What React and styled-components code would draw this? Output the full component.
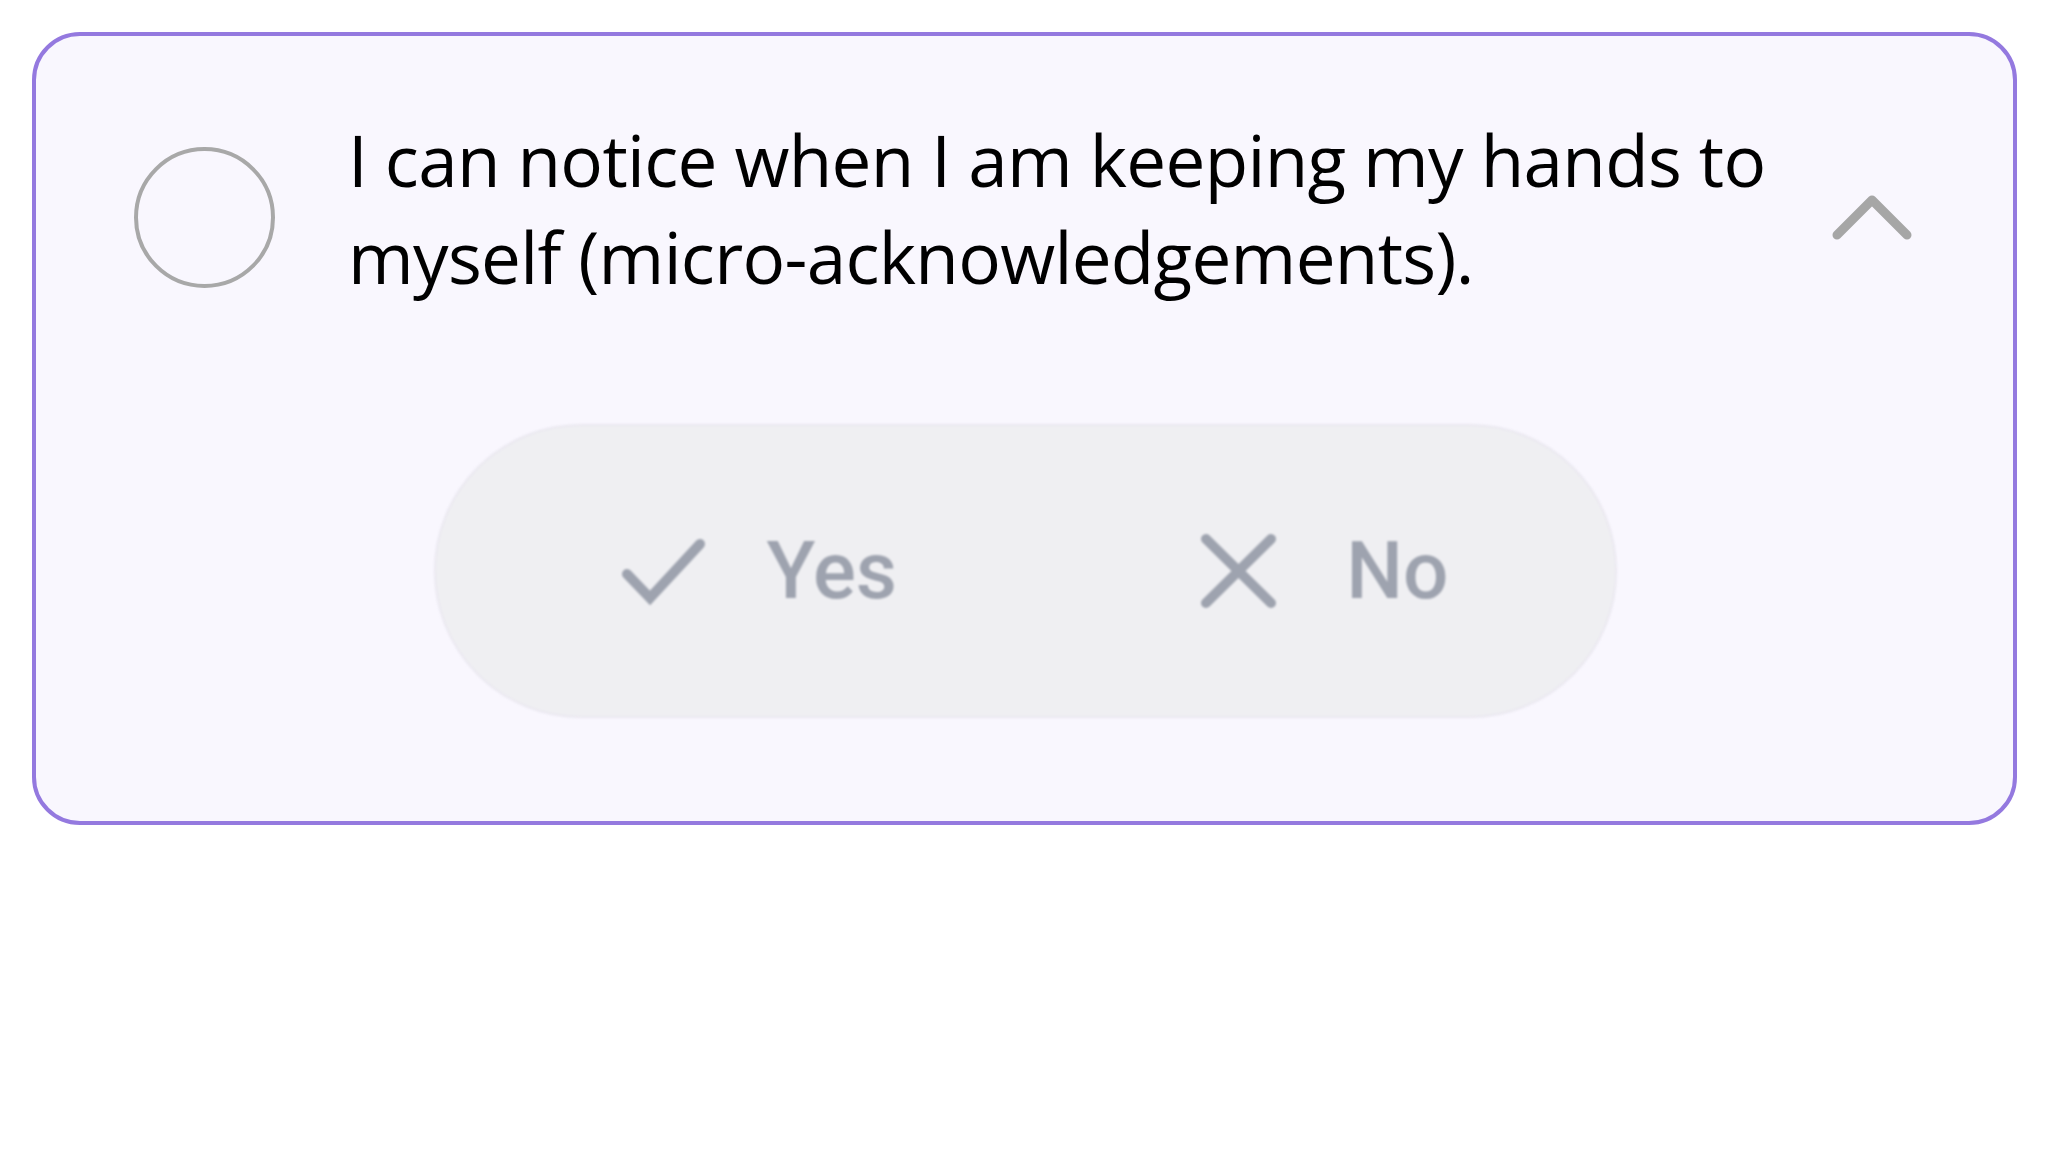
import React from 'react';
import styled, { createGlobalStyle } from 'styled-components';

const GlobalStyle = createGlobalStyle`
  html, body {
    margin: 0;
    padding: 0;
    background: #ffffff;
  }
  body {
    font-family: "Open Sans", sans-serif;
  }
`;

const Page = styled.div`
  padding: 32px 31px 0 32px;
`;

const Card = styled.div`
  box-sizing: border-box;
  border: 4px solid #9479df;
  border-radius: 48px;
  background: #f9f7fe;
  padding: 75px 96px 103px 98px;
`;

const Header = styled.div`
  display: flex;
  align-items: flex-start;
`;

const Radio = styled.div`
  box-sizing: border-box;
  flex: none;
  width: 141px;
  height: 141px;
  margin-top: 36px;
  border-radius: 50%;
  border: 4px solid #a8a8a8;
`;

const Question = styled.p`
  flex: 1;
  margin: 0 0 0 73px;
  font-family: "Open Sans", sans-serif;
  font-size: 71px;
  letter-spacing: -0.7px;
  line-height: 97px;
  color: #000000;
  max-width: 1448px;
`;

const Chevron = styled.svg`
  flex: none;
  margin-top: 79px;
  margin-left: auto;
`;

const Toggle = styled.div`
  display: flex;
  align-items: center;
  width: 1183px;
  height: 294px;
  box-sizing: border-box;
  margin: 119px auto 0;
  padding: 0 9px 0 39px;
  border-radius: 147px;
  background: #efeff2;
  border: 2px solid #eae8f0;
  filter: blur(1px);
`;

const Choice = styled.div`
  flex: 1;
  display: flex;
  align-items: center;
  justify-content: center;
  gap: ${props => props.gap}px;
  font-family: Roboto, "Liberation Sans", sans-serif;
  font-weight: 500;
  font-size: 80px;
  color: #9ea3af;
`;

const Label = styled.span`
  line-height: 1;
`;

const CheckIcon = () => (
  <svg width="90" height="70" viewBox="0 0 90 70">
    <path d="M8 38 L31 62 L81 8" fill="none" stroke="#9ea3af" strokeWidth="10" strokeLinecap="round" strokeLinejoin="miter" />
  </svg>
);

const XIcon = () => (
  <svg width="82" height="80" viewBox="0 0 82 80">
    <path d="M8 8 L73 72 M73 8 L8 72" fill="none" stroke="#9ea3af" strokeWidth="10" strokeLinecap="round" />
  </svg>
);

export default function App() {
  return (
    <>
      <GlobalStyle />
      <Page>
        <Card>
          <Header>
            <Radio />
            <Question>
              I can notice when I am keeping my hands to myself (micro-acknowledgements).
            </Question>
            <Chevron width="90" height="55" viewBox="0 0 90 55">
              <path d="M10 45 L45 10 L80 45" fill="none" stroke="#a6a6a6" strokeWidth="9" strokeLinecap="round" strokeLinejoin="round" />
            </Chevron>
          </Header>
          <Toggle>
            <Choice gap={58}>
              <CheckIcon />
              <Label>Yes</Label>
            </Choice>
            <Choice gap={66}>
              <XIcon />
              <Label>No</Label>
            </Choice>
          </Toggle>
        </Card>
      </Page>
    </>
  );
}
